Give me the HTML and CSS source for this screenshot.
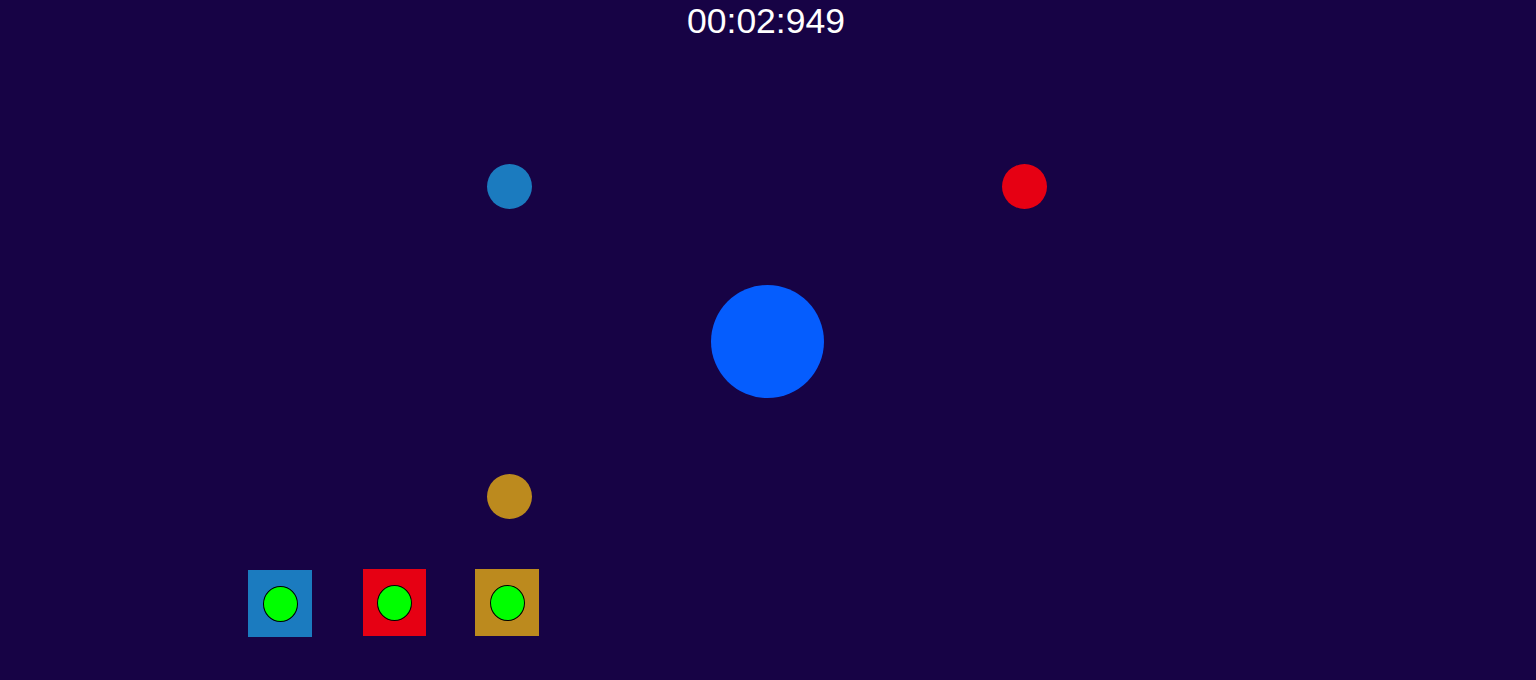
FILE: index.html
```html
<!DOCTYPE html>
<html>
<head>
<meta charset="utf-8">
<link rel="stylesheet" href="styles.css">
</head>
<body>
<div class="stage">
  <div class="timer">00:02:949</div>
  <div class="ball ball-blue"></div>
  <div class="ball ball-red"></div>
  <div class="ball ball-gold"></div>
  <div class="player"></div>
  <div class="slot slot-blue"><span class="dot"></span></div>
  <div class="slot slot-red"><span class="dot"></span></div>
  <div class="slot slot-gold"><span class="dot"></span></div>
</div>
</body>
</html>
```
FILE: styles.css
```css
html, body {
  margin: 0;
  padding: 0;
  background: #170345;
  overflow: hidden;
}
.stage {
  position: relative;
  width: 1536px;
  height: 680px;
  background: #170345;
}
.timer {
  padding-top: 3px;
  padding-right: 4px;
  text-align: center;
  font-family: "Liberation Sans", Arial, sans-serif;
  font-size: 35.5px;
  line-height: 36px;
  color: #ffffff;
}
.ball {
  position: absolute;
  width: 45px;
  height: 45px;
  border-radius: 50%;
}
.ball-blue { left: 487px; top: 164px; background: #1b7bbf; }
.ball-red { left: 1002px; top: 164px; background: #e60013; }
.ball-gold { left: 487px; top: 474px; background: #bc8a1e; }
.player {
  position: absolute;
  left: 711px;
  top: 285px;
  width: 113px;
  height: 113px;
  border-radius: 50%;
  background: #055dfe;
}
.slot {
  position: absolute;
  width: 64px;
  height: 67px;
  display: flex;
  align-items: center;
  justify-content: center;
}
.slot-blue { left: 248px; top: 570px; background: #1b7bbf; }
.slot-red { left: 363px; top: 569px; width: 63px; background: #e60013; }
.slot-gold { left: 475px; top: 569px; background: #bc8a1e; }
.dot {
  display: block;
  box-sizing: border-box;
  width: 35px;
  height: 36px;
  border-radius: 50%;
  background: #00ff00;
  border: 1.5px solid #000000;
}
```
